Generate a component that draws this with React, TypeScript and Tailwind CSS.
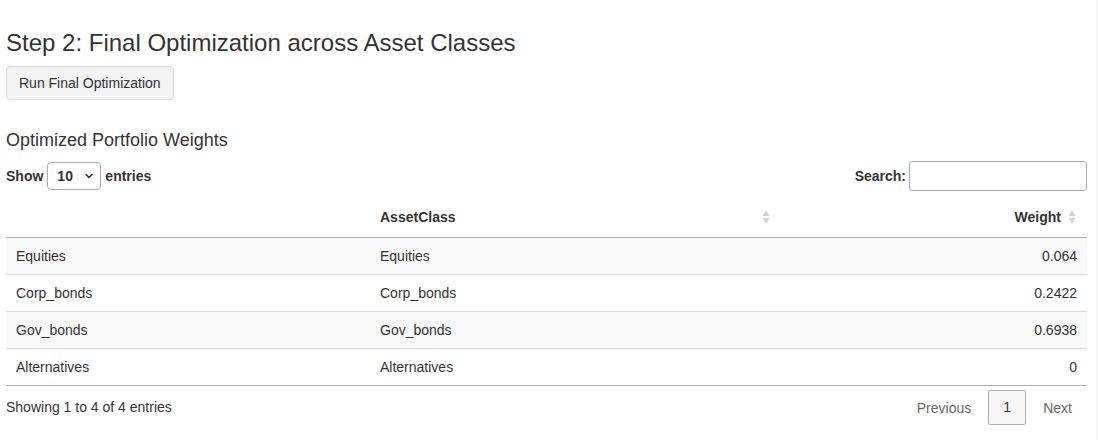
import React from "react";

const rows = [
  ["Equities", "Equities", "0.064"],
  ["Corp_bonds", "Corp_bonds", "0.2422"],
  ["Gov_bonds", "Gov_bonds", "0.6938"],
  ["Alternatives", "Alternatives", "0"],
];

function SortIcon() {
  return (
    <svg width="8" height="16" viewBox="0 0 8 16" className="shrink-0">
      <path d="M4 1 L7.5 7 L0.5 7 Z" fill="#d4d4d4" />
      <path d="M4 15 L7.5 9 L0.5 9 Z" fill="#d4d4d4" />
    </svg>
  );
}

export default function App() {
  return (
    <div
      className="w-[1098px] h-[440px] bg-white border-r border-[#ececec] text-[#333] overflow-hidden"
      style={{ fontFamily: '"Liberation Sans", Arial, Helvetica, sans-serif' }}
    >
      <div className="pl-[6px] w-[1087px]">
        <h3 className="text-[24px] leading-[26px] pt-[30px] font-normal">
          Step 2: Final Optimization across Asset Classes
        </h3>
        <button className="mt-[10px] h-[34px] px-[12px] text-[14px] bg-[#f4f4f4] border border-[#dadada] rounded-[4px] text-[#333]">
          Run Final Optimization
        </button>
        <h4 className="mt-[30px] text-[18px] leading-[20px] font-normal">
          Optimized Portfolio Weights
        </h4>
        <div className="mt-[11px] flex items-center justify-between h-[30px]">
          <div className="flex items-center text-[14px] font-bold">
            <span>Show</span>
            <div className="ml-[4px] mr-[4px] w-[54px] h-[28px] border border-[#aaa] rounded-[4px] flex items-center justify-between pl-[9px] pr-[6px] bg-white">
              <span className="font-bold">10</span>
              <svg width="10" height="10" viewBox="0 0 10 10">
                <path d="M2 3.5 L5 6.5 L8 3.5" fill="none" stroke="#333" strokeWidth="1.6" strokeLinecap="round" strokeLinejoin="round" />
              </svg>
            </div>
            <span>entries</span>
          </div>
          <div className="flex items-center text-[14px] font-bold">
            <span>Search:</span>
            <div className="ml-[3px] w-[178px] h-[30px] border border-[#aaa] rounded-[3px] bg-white" />
          </div>
        </div>
        <div className="mt-[6px] text-[14px]">
          <div className="grid grid-cols-[364px_406px_311px] border-b border-[#b0b0b0] font-bold">
            <div className="py-[10px] pl-[10px] leading-[20px]">&nbsp;</div>
            <div className="py-[10px] pl-[10px] pr-[6px] leading-[20px] flex items-center justify-between">
              <span>AssetClass</span>
              <SortIcon />
            </div>
            <div className="py-[10px] pr-[11px] leading-[20px] flex items-center justify-end gap-[7px]">
              <span>Weight</span>
              <SortIcon />
            </div>
          </div>
          {rows.map((r, i) => (
            <div
              key={r[0]}
              className={`grid grid-cols-[364px_406px_311px] leading-[20px] ${
                i < rows.length - 1 ? "border-b border-[#dddddd]" : "border-b border-[#b0b0b0]"
              } ${i % 2 === 0 ? "bg-[#f9f9f9]" : "bg-white"}`}
            >
              <div className="py-[8px] px-[10px]">{r[0]}</div>
              <div className="py-[8px] px-[10px]">{r[1]}</div>
              <div className="py-[8px] px-[10px] text-right">{r[2]}</div>
            </div>
          ))}
        </div>
        <div className="mt-[4px] flex items-center justify-between text-[14px]">
          <span>Showing 1 to 4 of 4 entries</span>
          <div className="flex items-center text-[#666]">
            <span className="px-[11px] leading-[20px]">Previous</span>
            <span className="mx-[6px] w-[38px] h-[35px] flex items-center justify-center border border-[#b0b0b0] rounded-[2px] bg-[#f5f5f5] text-[#333]">
              1
            </span>
            <span className="pl-[11px] pr-[15px] leading-[20px]">Next</span>
          </div>
        </div>
      </div>
    </div>
  );
}
